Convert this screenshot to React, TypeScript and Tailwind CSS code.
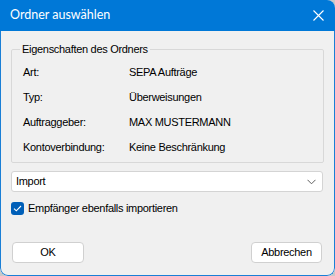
import React from "react";

// Windows-style "Ordner auswählen" dialog

const rows: { label: string; value: string }[] = [
  { label: "Art:", value: "SEPA Aufträge" },
  { label: "Typ:", value: "Überweisungen" },
  { label: "Auftraggeber:", value: "MAX MUSTERMANN" },
  { label: "Kontoverbindung:", value: "Keine Beschränkung" },
];

export default function App() {
  return (
    <div className="w-[335px] h-[276px] bg-[#c8c8c8] font-['Liberation_Sans',Arial,sans-serif]">
      <div className="flex flex-col w-full h-full rounded-tr-[8px] rounded-b-[8px] overflow-hidden bg-[#f0f0f0]">
        {/* Title bar */}
        <div className="flex items-center justify-between h-[31px] pl-[10px] pr-[10px] bg-[#0078d7] text-white flex-shrink-0">
          <span className="text-[12.5px] font-['Lato','Liberation_Sans',sans-serif] leading-none">
            Ordner auswählen
          </span>
          <svg width="11" height="11" viewBox="0 0 11 11" className="mr-[1px]">
            <path d="M0.5 0.5 L10.5 10.5 M10.5 0.5 L0.5 10.5" stroke="white" strokeWidth="1.1" />
          </svg>
        </div>

        {/* Body */}
        <div className="flex flex-col flex-1 px-[10px] pt-[11px] pb-[12px] border-x border-b border-[#1a7fd6] rounded-b-[8px] text-[11px] tracking-[-0.3px] text-black">
          <fieldset className="border border-[#d8d8d8] rounded-[2px] pl-[11px] pr-[8px] pt-[4px] pb-[2px]">
            <legend className="ml-[-3px] px-[2px] leading-[14px]">Eigenschaften des Ordners</legend>
            {rows.map((r) => (
              <div key={r.label} className="flex items-center h-[25px]">
                <span className="w-[106px]">{r.label}</span>
                <span>{r.value}</span>
              </div>
            ))}
          </fieldset>

          {/* Combo box */}
          <div className="flex items-center justify-between h-[21px] mt-[8px] w-[312px] pl-[4px] pr-[6px] bg-white border border-[#d4d4d4] rounded-[3px]">
            <span>Import</span>
            <svg width="9" height="6" viewBox="0 0 9 6">
              <path d="M0.5 0.8 L4.5 4.8 L8.5 0.8" stroke="#606060" strokeWidth="1" fill="none" />
            </svg>
          </div>

          {/* Checkbox */}
          <div className="flex items-center gap-[4px] mt-[8px]">
            <div className="flex items-center justify-center w-[13px] h-[13px] rounded-[3px] bg-[#005fb8]">
              <svg width="9" height="7" viewBox="0 0 9 7">
                <path d="M1 3.6 L3.3 5.8 L8 1" stroke="white" strokeWidth="1.1" fill="none" />
              </svg>
            </div>
            <span>Empfänger ebenfalls importieren</span>
          </div>

          {/* Buttons */}
          <div className="flex items-center justify-between mt-auto pl-[1px] pr-[2px]">
            <button className="w-[72px] h-[21px] bg-white border border-[#d0d0d0] rounded-[4px]">
              OK
            </button>
            <button className="w-[71px] h-[21px] bg-white border border-[#d0d0d0] rounded-[4px]">
              Abbrechen
            </button>
          </div>
        </div>
      </div>
    </div>
  );
}
